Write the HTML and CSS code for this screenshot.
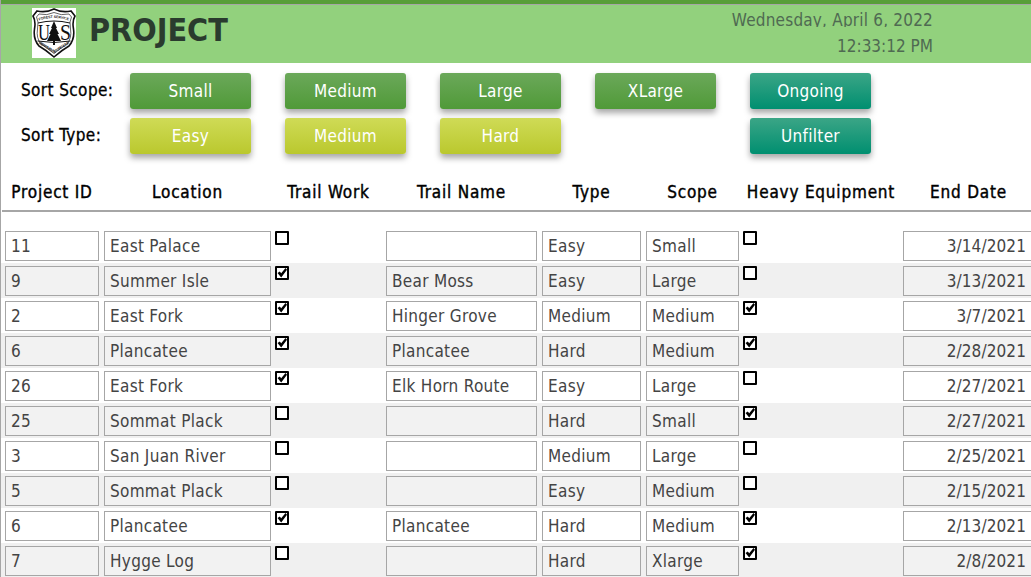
FILE: index.html
```html
<!DOCTYPE html>
<html lang="en">
<head>
<meta charset="utf-8">
<title>Project</title>
<link rel="stylesheet" href="styles.css">
</head>
<body>
<div class="page">
  <header class="banner">
    <div class="logo">
      <svg viewBox="0 0 44 50" width="44" height="50" aria-hidden="true">
        <defs>
          <path id="arc-top" d="M7 12.500 Q22 7.500 37 12.500"/>
          <path id="arc-bottom" d="M6.500 35.500 Q14 40 22 45 Q30 40 37.500 35.500"/>
        </defs>
        <path d="M5 3 Q14 5 22 1 Q30 5 39 3 L43 8 Q40 13 41.500 21 Q43 31 37 38 Q30 42 22 49 Q14 42 7 38 Q1 31 2.500 21 Q4 13 1 8 Z" fill="#fff" stroke="#111" stroke-width="1.600"/>
        <path d="M7 6 Q15 8 22 4.500 Q29 8 37 6 L39.500 9 Q37 13 38.500 21 Q40 30 35 36 Q29 40 22 45.500 Q15 40 9 36 Q4 30 5.500 21 Q7 13 4.500 9 Z" fill="none" stroke="#222" stroke-width=".7"/>
        <path d="M6 15 Q22 11 38 15 M5.500 33 Q22 36 38.500 33" fill="none" stroke="#111" stroke-width="1"/>
        <text class="logo-small"><textPath href="#arc-top" textLength="30">FOREST SERVICE</textPath></text>
        <text class="logo-small"><textPath href="#arc-bottom" textLength="38">DEPARTMENT OF AGRICULTURE</textPath></text>
        <path d="M22 13 L25 20 L24 20 L27 26 L25.500 26 L29 33 L23 33 L23 37 L21 37 L21 33 L15 33 L18.500 26 L17 26 L20 20 L19 20 Z" fill="#111"/>
        <text x="6" y="32" class="logo-letter" textLength="12" lengthAdjust="spacingAndGlyphs">U</text>
        <text x="28" y="32" class="logo-letter" textLength="11" lengthAdjust="spacingAndGlyphs">S</text>
      </svg>
    </div>
    <h1 class="title">PROJECT</h1>
    <div class="clock">
      <div class="clock-date">Wednesday, April 6, 2022</div>
      <div class="clock-time">12:33:12 PM</div>
    </div>
  </header>

  <section class="filters">
    <div class="filter-label">Sort Scope:</div>
    <button class="btn green">Small</button>
    <button class="btn green">Medium</button>
    <button class="btn green">Large</button>
    <button class="btn green">XLarge</button>
    <button class="btn teal">Ongoing</button>
    <div class="filter-label">Sort Type:</div>
    <button class="btn lime">Easy</button>
    <button class="btn lime">Medium</button>
    <button class="btn lime">Hard</button>
    <button class="btn teal col-last">Unfilter</button>
  </section>

  <div class="grid-row heading">
    <div>Project ID</div><div>Location</div><div>Trail Work</div><div>Trail Name</div><div>Type</div><div>Scope</div><div>Heavy Equipment</div><div>End Date</div>
  </div>

  <div class="rows">
    <div class="grid-row row">
      <div class="cell">11</div><div class="cell">East Palace</div><div><input class="tick" type="checkbox"></div><div class="cell"></div><div class="cell">Easy</div><div class="cell">Small</div><div><input class="tick" type="checkbox"></div><div class="cell date">3/14/2021</div>
    </div>
    <div class="grid-row row">
      <div class="cell">9</div><div class="cell">Summer Isle</div><div><input class="tick" type="checkbox" checked></div><div class="cell">Bear Moss</div><div class="cell">Easy</div><div class="cell">Large</div><div><input class="tick" type="checkbox"></div><div class="cell date">3/13/2021</div>
    </div>
    <div class="grid-row row">
      <div class="cell">2</div><div class="cell">East Fork</div><div><input class="tick" type="checkbox" checked></div><div class="cell">Hinger Grove</div><div class="cell">Medium</div><div class="cell">Medium</div><div><input class="tick" type="checkbox" checked></div><div class="cell date">3/7/2021</div>
    </div>
    <div class="grid-row row">
      <div class="cell">6</div><div class="cell">Plancatee</div><div><input class="tick" type="checkbox" checked></div><div class="cell">Plancatee</div><div class="cell">Hard</div><div class="cell">Medium</div><div><input class="tick" type="checkbox" checked></div><div class="cell date">2/28/2021</div>
    </div>
    <div class="grid-row row">
      <div class="cell">26</div><div class="cell">East Fork</div><div><input class="tick" type="checkbox" checked></div><div class="cell">Elk Horn Route</div><div class="cell">Easy</div><div class="cell">Large</div><div><input class="tick" type="checkbox"></div><div class="cell date">2/27/2021</div>
    </div>
    <div class="grid-row row">
      <div class="cell">25</div><div class="cell">Sommat Plack</div><div><input class="tick" type="checkbox"></div><div class="cell"></div><div class="cell">Hard</div><div class="cell">Small</div><div><input class="tick" type="checkbox" checked></div><div class="cell date">2/27/2021</div>
    </div>
    <div class="grid-row row">
      <div class="cell">3</div><div class="cell">San Juan River</div><div><input class="tick" type="checkbox"></div><div class="cell"></div><div class="cell">Medium</div><div class="cell">Large</div><div><input class="tick" type="checkbox"></div><div class="cell date">2/25/2021</div>
    </div>
    <div class="grid-row row">
      <div class="cell">5</div><div class="cell">Sommat Plack</div><div><input class="tick" type="checkbox"></div><div class="cell"></div><div class="cell">Easy</div><div class="cell">Medium</div><div><input class="tick" type="checkbox"></div><div class="cell date">2/15/2021</div>
    </div>
    <div class="grid-row row">
      <div class="cell">6</div><div class="cell">Plancatee</div><div><input class="tick" type="checkbox" checked></div><div class="cell">Plancatee</div><div class="cell">Hard</div><div class="cell">Medium</div><div><input class="tick" type="checkbox" checked></div><div class="cell date">2/13/2021</div>
    </div>
    <div class="grid-row row">
      <div class="cell">7</div><div class="cell">Hygge Log</div><div><input class="tick" type="checkbox"></div><div class="cell"></div><div class="cell">Hard</div><div class="cell">Xlarge</div><div><input class="tick" type="checkbox" checked></div><div class="cell date">2/8/2021</div>
    </div>
  </div>
</div>
</body>
</html>
```
FILE: styles.css
```css
* { box-sizing: border-box; }
html, body { margin: 0; height: 100%; overflow: hidden; background: #fff; }
body { font-family: "DejaVu Sans Condensed", "DejaVu Sans", sans-serif; font-stretch: condensed; }

.page {
  width: 1035px;
  height: 577px;
  overflow: hidden;
  border-left: 1px solid #a6a6a6;
}

.banner {
  height: 63px;
  display: flex;
  align-items: flex-start;
  background: #92d17d;
  border-top: 4px solid #579e38;
  box-shadow: inset 0 1px 0 #a6a6a6;
  padding-left: 31px;
}
.logo {
  width: 44px;
  height: 50px;
  margin-top: 4px;
  background: #fff;
  flex: none;
}
.logo svg { display: block; }
.logo-letter { font: 400 23px "Liberation Serif", serif; fill: #111; }
.logo-small { font: 700 3.500px "Liberation Sans", sans-serif; fill: #222; }

.title {
  margin: 5px 0 0 13px;
  font-size: 32px;
  line-height: 42px;
  font-weight: 700;
  color: #2a3b2e;
}
.clock {
  position: absolute;
  top: 10px;
  left: 700px;
  width: 233px;
  text-align: right;
  font-size: 17px;
  color: #4f6a52;
}
.clock-date { height: 17px; line-height: 20px; overflow: hidden; letter-spacing: .2px; }
.clock-time { margin-top: 8px; line-height: 22px; }

.filters {
  display: grid;
  grid-template-columns: 109px 155px 155px 155px 155px 121px;
  grid-auto-rows: 36px;
  row-gap: 9px;
  padding: 10px 0 0 20px;
}
.filter-label {
  font-size: 17px;
  font-weight: 400;
  -webkit-text-stroke: .3px #000;
  color: #000;
  line-height: 34px;
  letter-spacing: .4px;
}
.btn {
  width: 121px;
  height: 36px;
  padding: 0 0 1px;
  border: 0;
  border-radius: 3px;
  font: 400 17px "DejaVu Sans Condensed", "DejaVu Sans", sans-serif;
  font-stretch: condensed;
  letter-spacing: .3px;
  color: #fff;
  box-shadow: 0 4px 6px rgba(0, 0, 0, .35);
}
.green { background: linear-gradient(#6ba85a, #509a38); }
.lime { background: linear-gradient(#cfdb56, #bac82e); }
.teal { background: linear-gradient(#3ba586, #008f70); }
.col-last { grid-column: 6; }

.grid-row {
  display: grid;
  grid-template-columns: 94px 167px 105px 151px 99px 93px 154px 131px;
  column-gap: 5px;
  padding-left: 4px;
}

.heading {
  margin: 20px 0 0 1px;
  padding: 0 0 6px 3px;
  height: 38px;
  border-bottom: 2px solid #a6a6a6;
  font-size: 17px;
  font-weight: 400;
  -webkit-text-stroke: .4px #000;
  line-height: 36px;
  letter-spacing: .8px;
  text-align: center;
  color: #000;
  white-space: nowrap;
}

.rows { margin-top: 16px; }
.row { height: 35px; padding-top: 3px; }
.row:nth-child(even) { background: #f0f0f0; }

.cell {
  height: 30px;
  border: 1px solid #a6a6a6;
  padding: 0 5px;
  font-size: 17px;
  line-height: 28px;
  letter-spacing: .3px;
  color: #444;
  background: #fff;
  white-space: nowrap;
}
.row:nth-child(even) .cell { background: #f2f2f2; }
.date { text-align: right; padding-right: 7px; letter-spacing: .1px; }

.tick {
  appearance: none;
  display: block;
  position: relative;
  width: 14px;
  height: 14px;
  margin: 0 0 0 -1px;
  border: 2px solid #000;
  border-radius: 1px;
  background: #fff;
}
.tick:checked::after {
  content: "";
  position: absolute;
  inset: 0;
  background: #000;
  clip-path: polygon(5% 50%, 28% 35%, 42% 52%, 85% 0, 100% 18%, 42% 95%);
}
```
